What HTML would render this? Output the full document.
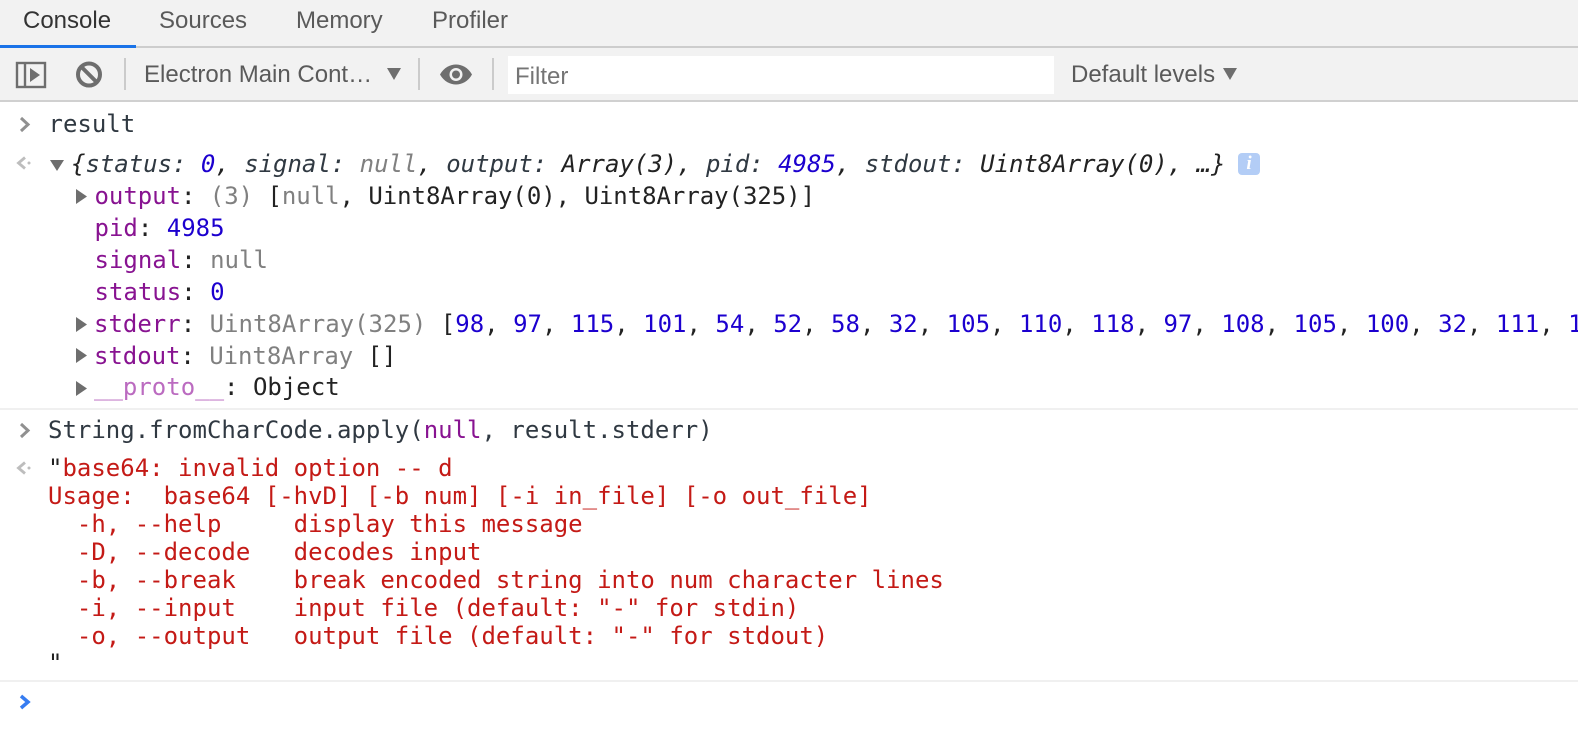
<!DOCTYPE html>
<html><head><meta charset="utf-8">
<style>
html,body{margin:0;padding:0;width:1578px;height:752px;overflow:hidden;background:#fff}
#a{position:relative;width:1578px;height:752px;overflow:hidden}
.r{position:absolute}
.t{position:absolute;font-family:"Liberation Sans",sans-serif;font-size:24px;line-height:28px;white-space:pre;color:#5a5a5a}
.m{position:absolute;font-family:"DejaVu Sans Mono",monospace;font-size:24px;line-height:28px;white-space:pre;color:#222}
.k{color:#881391}.n{color:#1c00cf}.g{color:#808080}.d{color:#bb6bc0}.u{color:#303942}.o{color:#c41a16}
svg{position:absolute;overflow:visible}
</style></head><body><div id="a">
<div class="r" style="left:0;top:0;width:1578px;height:100px;background:#f2f2f2"></div>
<div class="r" style="left:0;top:46px;width:1578px;height:2px;background:#cdcdcd"></div>
<div class="r" style="left:0;top:45px;width:136px;height:3px;background:#1a73e8"></div>
<div class="r" style="left:0;top:100px;width:1578px;height:2px;background:#d0d0d0"></div>
<div class="t" style="left:23px;top:7px;color:#333">Console</div>
<div class="t" style="left:159px;top:7px">Sources</div>
<div class="t" style="left:296px;top:7px">Memory</div>
<div class="t" style="left:432px;top:7px">Profiler</div>

<svg style="left:0;top:0" width="560" height="100">
<rect x="17" y="63" width="28" height="24" fill="none" stroke="#6e6e6e" stroke-width="2.400"/>
<path d="M25 63V87" stroke="#6e6e6e" stroke-width="2.400"/>
<path d="M30 68L40 75L30 82Z" fill="#6e6e6e"/>
<circle cx="89" cy="74.500" r="11" fill="none" stroke="#6e6e6e" stroke-width="4"/>
<path d="M81 66.500L97 82.500" stroke="#6e6e6e" stroke-width="4"/>
<rect x="124" y="58" width="2" height="32" fill="#cbcbcb"/>
<path d="M387 68H401L394 80Z" fill="#6e6e6e"/>
<rect x="418" y="58" width="2" height="32" fill="#cbcbcb"/>
<path d="M440 74.500C444 67.500 450 64.500 456 64.500C462 64.500 468 67.500 472 74.500C468 81.500 462 84.500 456 84.500C450 84.500 444 81.500 440 74.500Z" fill="#6e6e6e"/>
<circle cx="456" cy="74.500" r="6.500" fill="#f2f2f2"/>
<circle cx="456" cy="74.500" r="4" fill="#6e6e6e"/>
<rect x="492" y="58" width="2" height="32" fill="#cbcbcb"/>
</svg>
<div class="t" style="left:144px;top:61px">Electron Main Cont…</div>
<div class="r" style="left:508px;top:56px;width:546px;height:38px;background:#fff"></div>
<div class="t" style="left:515px;top:63px;color:#757575">Filter</div>
<div class="t" style="left:1071px;top:61px">Default levels</div>
<svg style="left:1000px;top:0" width="240" height="100"><path d="M223 68H237L230 80Z" fill="#6e6e6e"/></svg>

<svg style="left:0;top:0" width="100" height="740">
<path d="M21 118L28 124.500L21 131" fill="none" stroke="#909090" stroke-width="3"/>
<path d="M25 157.500L18.500 163L25 168.500" fill="none" stroke="#bdbdbd" stroke-width="2.800"/>
<circle cx="29" cy="163" r="1.500" fill="#bdbdbd"/>
<path d="M50 160H64L57 171Z" fill="#6e6e6e"/>
<path d="M76 189V204L87 196.500Z" fill="#6e6e6e"/>
<path d="M76 317V332L87 324.500Z" fill="#6e6e6e"/>
<path d="M76 348V363L87 355.500Z" fill="#6e6e6e"/>
<path d="M76 381V396L87 388.500Z" fill="#6e6e6e"/>
<path d="M21 424L28 430.500L21 437" fill="none" stroke="#909090" stroke-width="3"/>
<path d="M25 462.500L18.500 468L25 473.500" fill="none" stroke="#bdbdbd" stroke-width="2.800"/>
<circle cx="29" cy="468" r="1.500" fill="#bdbdbd"/>
<path d="M21 696L28 702L21 708" fill="none" stroke="#367cf1" stroke-width="3.500"/>
</svg>

<div class="m u" style="left:48.500px;top:110px">result</div>
<div class="m" style="left:71px;top:150px;font-style:italic;letter-spacing:-0.02px">{<span class="u">status:</span> <span class="n">0</span>, <span class="u">signal:</span> <span class="g">null</span>, <span class="u">output:</span> Array(3), <span class="u">pid:</span> <span class="n">4985</span>, <span class="u">stdout:</span> Uint8Array(0), …}</div>
<div class="r" style="left:1238px;top:153px;width:22px;height:22px;border-radius:4px;background:#b3cdf6"></div>
<div class="r" style="left:1238px;top:153px;width:22px;height:22px;font:italic bold 19px/22px 'Liberation Serif',serif;color:#fff;text-align:center">i</div>
<div class="m" style="left:94.500px;top:182px;letter-spacing:-0.04px"><span class="k">output</span>: <span class="g">(3)</span> [<span class="g">null</span>, Uint8Array(0), Uint8Array(325)]</div>
<div class="m" style="left:94.500px;top:214px"><span class="k">pid</span>: <span class="n">4985</span></div>
<div class="m" style="left:94.500px;top:246px"><span class="k">signal</span>: <span class="g">null</span></div>
<div class="m" style="left:94.500px;top:278px"><span class="k">status</span>: <span class="n">0</span></div>
<div class="m" style="left:94px;top:310px"><span class="k">stderr</span>: <span class="g">Uint8Array(325)</span> [<span class="n">98</span>, <span class="n">97</span>, <span class="n">115</span>, <span class="n">101</span>, <span class="n">54</span>, <span class="n">52</span>, <span class="n">58</span>, <span class="n">32</span>, <span class="n">105</span>, <span class="n">110</span>, <span class="n">118</span>, <span class="n">97</span>, <span class="n">108</span>, <span class="n">105</span>, <span class="n">100</span>, <span class="n">32</span>, <span class="n">111</span>, <span class="n">112</span></div>
<div class="m" style="left:94px;top:342px;letter-spacing:-0.05px"><span class="k">stdout</span>: <span class="g">Uint8Array</span> []</div>
<div class="m" style="left:94px;top:373px"><span class="d">__proto__</span>: Object</div>
<div class="r" style="left:0;top:408px;width:1578px;height:2px;background:#f0f0f0"></div>
<div class="m u" style="left:48px;top:416px">String.fromCharCode.apply(<span class="k">null</span>, result.stderr)</div>
<div class="m" style="left:48px;top:454px">"<span class="o">base64: invalid option -- d</span></div>
<div class="m o" style="left:48px;top:482px">Usage:  base64 [-hvD] [-b num] [-i in_file] [-o out_file]</div>
<div class="m o" style="left:48px;top:510px">  -h, --help     display this message</div>
<div class="m o" style="left:48px;top:538px">  -D, --decode   decodes input</div>
<div class="m o" style="left:48px;top:566px">  -b, --break    break encoded string into num character lines</div>
<div class="m o" style="left:48px;top:594px">  -i, --input    input file (default: "-" for stdin)</div>
<div class="m o" style="left:48px;top:622px">  -o, --output   output file (default: "-" for stdout)</div>
<div class="m" style="left:48px;top:649px">"</div>
<div class="r" style="left:0;top:680px;width:1578px;height:2px;background:#f0f0f0"></div>
</div></body></html>
